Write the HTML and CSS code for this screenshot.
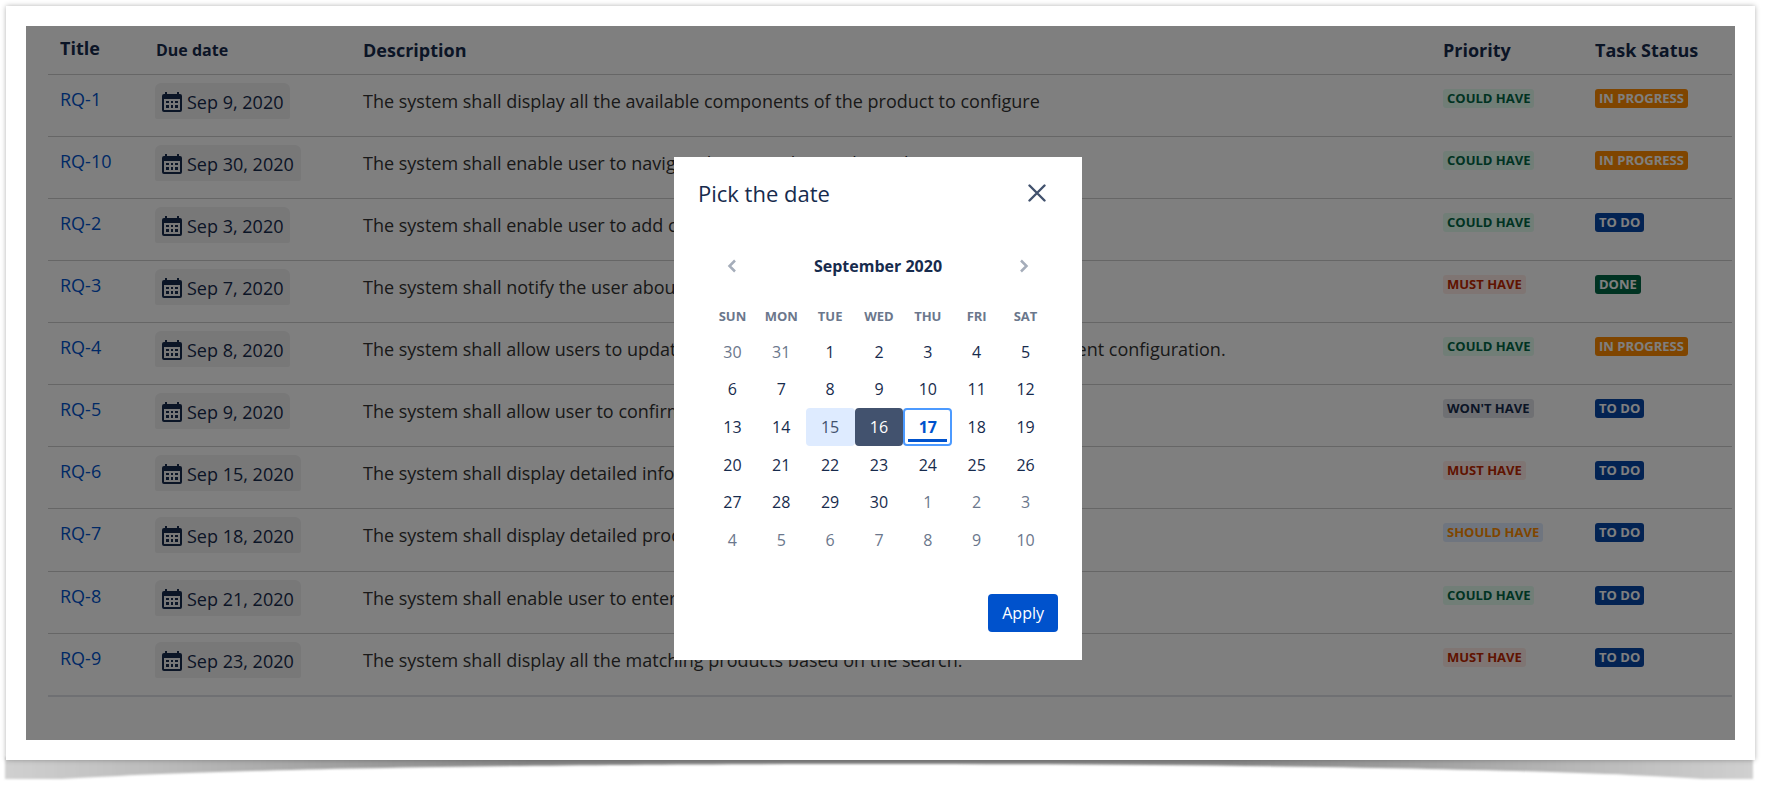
FILE: index.html
```
<!DOCTYPE html>
<html lang="en">

<head>
    <meta charset="UTF-8">
    <meta name="viewport" content="width=device-width, initial-scale=1.0">
    <title>Requirements</title>
    <link rel="stylesheet" href="styles.css">
</head>

<body>
    <svg class="sprite" aria-hidden="true">
        <symbol id="calendar" viewBox="0 0 20 20">
            <path fill="currentColor" fill-rule="evenodd" d="M3 0h2v2h10V0h2v2h1a2 2 0 0 1 2 2v14a2 2 0 0 1-2 2H2a2 2 0 0 1-2-2V4a2 2 0 0 1 2-2h1zM2 7v11h16V7zM4 9h3v2H4zM9 9h2v2H9zM13 9h3v2h-3zM4 13h3v3H4zM9 13h2v3H9zM13 13h3v3h-3z"/>
        </symbol>
    </svg>
    <div class="frame">
        <main class="panel">
            <table class="tasks">
                <colgroup>
                    <col class="col-title">
                    <col class="col-date">
                    <col>
                    <col class="col-priority">
                    <col class="col-status">
                </colgroup>
                <thead>
                    <tr>
                        <th class="title">Title</th>
                        <th class="date">Due date</th>
                        <th>Description</th>
                        <th>Priority</th>
                        <th>Task Status</th>
                    </tr>
                </thead>
                <tbody>
                    <tr>
                        <td class="title"><a href="#">RQ-1</a></td>
                        <td class="date"><button class="due"><svg><use href="#calendar"/></svg>Sep 9, 2020</button></td>
                        <td>The system shall display all the available components of the product to configure</td>
                        <td class="label"><span class="tag could">Could have</span></td>
                        <td class="label"><span class="tag progress">In progress</span></td>
                    </tr>
                    <tr>
                        <td class="title"><a href="#">RQ-10</a></td>
                        <td class="date"><button class="due"><svg><use href="#calendar"/></svg>Sep 30, 2020</button></td>
                        <td>The system shall enable user to navigate between the product tabs</td>
                        <td class="label"><span class="tag could">Could have</span></td>
                        <td class="label"><span class="tag progress">In progress</span></td>
                    </tr>
                    <tr>
                        <td class="title"><a href="#">RQ-2</a></td>
                        <td class="date"><button class="due"><svg><use href="#calendar"/></svg>Sep 3, 2020</button></td>
                        <td>The system shall enable user to add components</td>
                        <td class="label"><span class="tag could">Could have</span></td>
                        <td class="label"><span class="tag todo">To do</span></td>
                    </tr>
                    <tr>
                        <td class="title"><a href="#">RQ-3</a></td>
                        <td class="date"><button class="due"><svg><use href="#calendar"/></svg>Sep 7, 2020</button></td>
                        <td>The system shall notify the user about conflicts</td>
                        <td class="label"><span class="tag must">Must have</span></td>
                        <td class="label"><span class="tag done">Done</span></td>
                    </tr>
                    <tr>
                        <td class="title"><a href="#">RQ-4</a></td>
                        <td class="date"><button class="due"><svg><use href="#calendar"/></svg>Sep 8, 2020</button></td>
                        <td>The system shall allow users to update the configuration to resolve issues on the current configuration.</td>
                        <td class="label"><span class="tag could">Could have</span></td>
                        <td class="label"><span class="tag progress">In progress</span></td>
                    </tr>
                    <tr>
                        <td class="title"><a href="#">RQ-5</a></td>
                        <td class="date"><button class="due"><svg><use href="#calendar"/></svg>Sep 9, 2020</button></td>
                        <td>The system shall allow user to confirm the order</td>
                        <td class="label"><span class="tag wont">Won't have</span></td>
                        <td class="label"><span class="tag todo">To do</span></td>
                    </tr>
                    <tr>
                        <td class="title"><a href="#">RQ-6</a></td>
                        <td class="date"><button class="due"><svg><use href="#calendar"/></svg>Sep 15, 2020</button></td>
                        <td>The system shall display detailed information</td>
                        <td class="label"><span class="tag must">Must have</span></td>
                        <td class="label"><span class="tag todo">To do</span></td>
                    </tr>
                    <tr>
                        <td class="title"><a href="#">RQ-7</a></td>
                        <td class="date"><button class="due"><svg><use href="#calendar"/></svg>Sep 18, 2020</button></td>
                        <td>The system shall display detailed product list</td>
                        <td class="label"><span class="tag should">Should have</span></td>
                        <td class="label"><span class="tag todo">To do</span></td>
                    </tr>
                    <tr>
                        <td class="title"><a href="#">RQ-8</a></td>
                        <td class="date"><button class="due"><svg><use href="#calendar"/></svg>Sep 21, 2020</button></td>
                        <td>The system shall enable user to enter the text</td>
                        <td class="label"><span class="tag could">Could have</span></td>
                        <td class="label"><span class="tag todo">To do</span></td>
                    </tr>
                    <tr>
                        <td class="title"><a href="#">RQ-9</a></td>
                        <td class="date"><button class="due"><svg><use href="#calendar"/></svg>Sep 23, 2020</button></td>
                        <td>The system shall display all the matching products based on the search.</td>
                        <td class="label"><span class="tag must">Must have</span></td>
                        <td class="label"><span class="tag todo">To do</span></td>
                    </tr>
                </tbody>
            </table>

            <div class="backdrop">
                <div class="modal" role="dialog" aria-labelledby="modal-title">
                    <div class="modal-header">
                        <h2 id="modal-title">Pick the date</h2>
                        <button class="close" aria-label="Close">
                            <svg viewBox="0 0 18 18"><path d="M1.5 1.5l15 15M16.5 1.5l-15 15"/></svg>
                        </button>
                    </div>
                    <div class="month">
                        <button class="arrow" aria-label="Previous month">
                            <svg viewBox="0 0 10 14"><path d="M8 1.5L2.5 7L8 12.5"/></svg>
                        </button>
                        <h3>September 2020</h3>
                        <button class="arrow" aria-label="Next month">
                            <svg viewBox="0 0 10 14"><path d="M2 1.5L7.5 7L2 12.5"/></svg>
                        </button>
                    </div>
                    <table class="days">
                        <thead>
                            <tr><th>Sun</th><th>Mon</th><th>Tue</th><th>Wed</th><th>Thu</th><th>Fri</th><th>Sat</th></tr>
                        </thead>
                        <tbody>
                            <tr><td class="out">30</td><td class="out">31</td><td>1</td><td>2</td><td>3</td><td>4</td><td>5</td></tr>
                            <tr><td>6</td><td>7</td><td>8</td><td>9</td><td>10</td><td>11</td><td>12</td></tr>
                            <tr><td>13</td><td>14</td><td class="previous">15</td><td class="selected">16</td><td class="today"><span>17</span></td><td>18</td><td>19</td></tr>
                            <tr><td>20</td><td>21</td><td>22</td><td>23</td><td>24</td><td>25</td><td>26</td></tr>
                            <tr><td>27</td><td>28</td><td>29</td><td>30</td><td class="out">1</td><td class="out">2</td><td class="out">3</td></tr>
                            <tr><td class="out">4</td><td class="out">5</td><td class="out">6</td><td class="out">7</td><td class="out">8</td><td class="out">9</td><td class="out">10</td></tr>
                        </tbody>
                    </table>
                    <div class="modal-footer">
                        <button class="apply">Apply</button>
                    </div>
                </div>
            </div>
        </main>
    </div>
    <!-- curled paper shadow under the frame -->
    <svg class="curl" viewBox="0 0 1753 28" preserveAspectRatio="none" aria-hidden="true">
        <defs>
            <linearGradient id="shade">
                <stop offset="0" stop-color="#d0d0d0"/>
                <stop offset="0.1" stop-color="#b8b8b8"/>
                <stop offset="0.3" stop-color="#868686"/>
                <stop offset="0.7" stop-color="#868686"/>
                <stop offset="0.9" stop-color="#b8b8b8"/>
                <stop offset="1" stop-color="#d0d0d0"/>
            </linearGradient>
            <filter id="soft" x="-1%" y="-50%" width="102%" height="200%"><feGaussianBlur stdDeviation="1.3"/></filter>
        </defs>
        <path filter="url(#soft)" fill="url(#shade)" d="M-1-3H1751V19H1700C1600 12 1350 4 876 4C400 4 160 12 56 19H-1z"/>
    </svg>
</body>

</html>
```
FILE: styles.css
```
* {
    box-sizing: border-box;
}

body {
    margin: 0;
    padding: 6px 14px 0 6px;
    background-color: white;
    color: #172b4d;
    font-family: "Open Sans", "Noto Sans", sans-serif;
    font-size: 18px;
}

button {
    border: 0;
    padding: 0;
    background: none;
    color: inherit;
    font: inherit;
    cursor: pointer;
}

table {
    border-collapse: collapse;
}

.sprite {
    display: none;
}

.frame {
    padding: 20px;
    background-color: white;
    box-shadow: 0 0 5px rgba(0, 0, 0, 0.3);
    position: relative;
}

.panel {
    position: relative;
    padding: 0 3px 43px 22px;
}

.tasks {
    width: 100%;
    height: 671px;
    table-layout: fixed;
}

.tasks th,
.tasks td {
    padding: 0 0 0 12px;
    text-align: left;
    vertical-align: top;
    line-height: 24px;
    white-space: nowrap;
}

.tasks th {
    height: 48px;
    padding-top: 12px;
}

.tasks td {
    padding-top: 14px;
    border-top: 1px solid #ccc;
    color: #333;
}

.tasks tbody tr:last-child {
    border-bottom: 2px solid #dfe1e6;
}

.tasks th.title {
    padding-top: 10px;
}

.tasks th.date {
    padding-left: 11px;
    font-size: 16px;
}

.tasks td.title {
    padding-top: 12px;
}

.tasks td.date {
    padding: 8px 0 0 10px;
}

.tasks td.label {
    padding-top: 12px;
    line-height: 19px;
}

.col-title {
    width: 97px;
}

.col-date {
    width: 206px;
}

.col-priority {
    width: 152px;
}

.col-status {
    width: 149px;
}

.tasks a {
    color: #0052cc;
    text-decoration: none;
}

.due {
    display: flex;
    align-items: center;
    height: 36px;
    padding: 2px 7px 0 7px;
    gap: 5px;
    border-radius: 6px 6px 2px 2px;
    background-color: #f0f0f1;
    color: #172b4d;
}

.due svg {
    width: 20px;
    height: 20px;
}

.tag {
    display: inline-block;
    height: 19px;
    padding: 0 4px;
    border-radius: 3px;
    font-size: 13px;
    font-weight: 700;
    text-transform: uppercase;
}

.could {
    background-color: #e3fcef;
    color: #006644;
}

.must {
    background-color: #ffebe6;
    color: #bf2600;
}

.wont {
    background-color: #dfe1e6;
    color: #172b4d;
}

.should {
    background-color: #deebff;
    color: #ff8b00;
}

.progress {
    background-color: #ff8b00;
    color: white;
}

.todo {
    background-color: #0747a6;
    color: white;
}

.done {
    background-color: #006644;
    color: white;
}

.backdrop {
    position: absolute;
    inset: 0;
    display: flex;
    justify-content: center;
    align-items: flex-start;
    padding: 131px 5px 0 0;
    background-color: rgba(0, 0, 0, 0.5);
}

.modal {
    width: 408px;
    padding: 18px 24px 28px;
    background-color: white;
}

.modal-header {
    display: flex;
    justify-content: space-between;
    align-items: center;
    height: 36px;
    padding-right: 12px;
}

.modal-header h2 {
    margin: 0;
    font-size: 22px;
    font-weight: 400;
}

.close svg {
    display: block;
    width: 18px;
    height: 18px;
    fill: none;
    stroke: #42526e;
    stroke-width: 2.4;
    stroke-linecap: round;
}

.month {
    display: flex;
    justify-content: space-between;
    align-items: center;
    height: 24px;
    margin: 43px 29px 0;
}

.month h3 {
    margin: 0;
    font-size: 16px;
}

.arrow svg {
    display: block;
    width: 10px;
    height: 14px;
    fill: none;
    stroke: #a5adba;
    stroke-width: 2.5;
}

.days {
    width: 342px;
    height: 260px;
    margin: 21px 0 0 10px;
    table-layout: fixed;
    border-collapse: separate;
    border-spacing: 0;
}

.days th {
    height: 34px;
    padding: 0;
    color: #6b778c;
    font-size: 13px;
    text-transform: uppercase;
}

.days td {
    height: 37px;
    padding: 0;
    border: 2px solid transparent;
    border-radius: 4px;
    font-size: 16px;
    line-height: 24px;
    text-align: center;
}

.days .out {
    color: #6b778c;
}

.days .previous {
    border-color: #deebff;
    background-color: #deebff;
    color: #42526e;
}

.days .selected {
    border-color: #42526e;
    background-color: #42526e;
    color: white;
}

.days .today {
    border-color: #4c9aff;
    color: #0052cc;
    font-weight: 700;
}

.today span {
    display: block;
    margin: 0 3px;
    padding-top: 3px;
    border-bottom: 3px solid #0052cc;
}

.modal-footer {
    display: flex;
    justify-content: flex-end;
    margin-top: 35px;
}

.apply {
    height: 38px;
    padding: 0 14px;
    border-radius: 4px;
    background-color: #0052cc;
    color: white;
    font-size: 16px;
}

.curl {
    display: block;
    width: 100%;
    height: 28px;
    overflow: visible;
}
```
